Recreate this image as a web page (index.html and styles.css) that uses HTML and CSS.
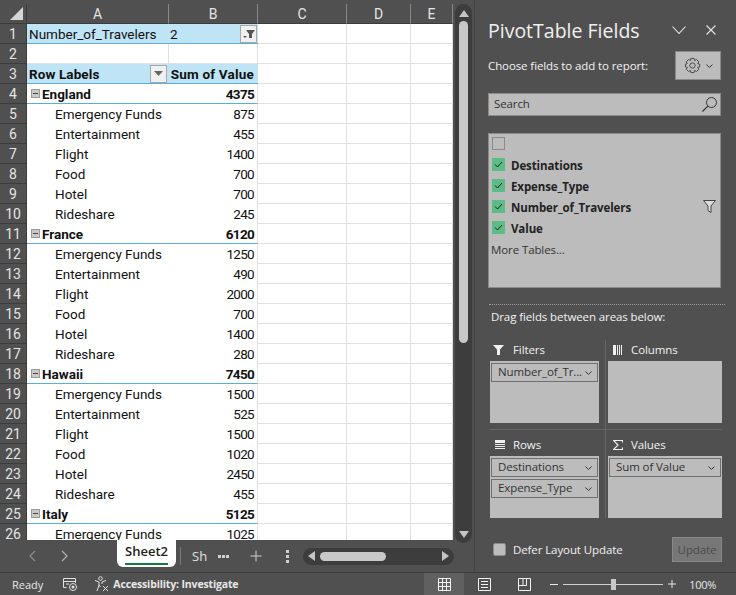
FILE: index.html
```html
<!DOCTYPE html>
<html lang="en">
<head>
    <meta charset="UTF-8">
    <title>PivotTable Fields</title>
    <link rel="stylesheet" href="styles.css">
</head>
<body>
<div class="main">
    <div class="workbook">
        <div class="sheet-area">
            <div class="sheet">
                <div class="head corner"><svg width="13" height="13" viewBox="0 0 13 13"><path d="M13 0V13H0Z" fill="#d6d6d6"/></svg></div>
                <div class="head col">A</div><div class="head col">B</div><div class="head col">C</div><div class="head col">D</div><div class="head col">E</div>

                <div class="head">1</div>
                <div class="cell band">Number_of_Travelers</div>
                <div class="cell band val-left">2<span class="drop"><svg width="14" height="10" viewBox="0 0 14 10"><path d="M4 1H13L10 5V9H7V5Z" fill="#555"/><path d="M1 7H5L3 9Z" fill="#555"/></svg></span></div>
                <div class="cell"></div><div class="cell"></div><div class="cell"></div>

                <div class="head">2</div>
                <div class="cell line"></div><div class="cell line"></div><div class="cell"></div><div class="cell"></div><div class="cell"></div>

                <div class="head">3</div>
                <div class="cell band strong">Row Labels<span class="drop"><svg width="9" height="5" viewBox="0 0 9 5"><path d="M0 0H9L4.500 5Z" fill="#666"/></svg></span></div>
                <div class="cell band strong sum-head">Sum of Value</div>
                <div class="cell"></div><div class="cell"></div><div class="cell"></div>

                <div class="head">4</div>
                <div class="cell group"><span class="toggle"></span>England</div><div class="cell group num">4375</div>
                <div class="cell"></div><div class="cell"></div><div class="cell"></div>
                <div class="head">5</div>
                <div class="cell item">Emergency Funds</div><div class="cell value">875</div>
                <div class="cell"></div><div class="cell"></div><div class="cell"></div>
                <div class="head">6</div>
                <div class="cell item">Entertainment</div><div class="cell value">455</div>
                <div class="cell"></div><div class="cell"></div><div class="cell"></div>
                <div class="head">7</div>
                <div class="cell item">Flight</div><div class="cell value">1400</div>
                <div class="cell"></div><div class="cell"></div><div class="cell"></div>
                <div class="head">8</div>
                <div class="cell item">Food</div><div class="cell value">700</div>
                <div class="cell"></div><div class="cell"></div><div class="cell"></div>
                <div class="head">9</div>
                <div class="cell item">Hotel</div><div class="cell value">700</div>
                <div class="cell"></div><div class="cell"></div><div class="cell"></div>
                <div class="head">10</div>
                <div class="cell item">Rideshare</div><div class="cell value">245</div>
                <div class="cell"></div><div class="cell"></div><div class="cell"></div>

                <div class="head">11</div>
                <div class="cell group"><span class="toggle"></span>France</div><div class="cell group num">6120</div>
                <div class="cell"></div><div class="cell"></div><div class="cell"></div>
                <div class="head">12</div>
                <div class="cell item">Emergency Funds</div><div class="cell value">1250</div>
                <div class="cell"></div><div class="cell"></div><div class="cell"></div>
                <div class="head">13</div>
                <div class="cell item">Entertainment</div><div class="cell value">490</div>
                <div class="cell"></div><div class="cell"></div><div class="cell"></div>
                <div class="head">14</div>
                <div class="cell item">Flight</div><div class="cell value">2000</div>
                <div class="cell"></div><div class="cell"></div><div class="cell"></div>
                <div class="head">15</div>
                <div class="cell item">Food</div><div class="cell value">700</div>
                <div class="cell"></div><div class="cell"></div><div class="cell"></div>
                <div class="head">16</div>
                <div class="cell item">Hotel</div><div class="cell value">1400</div>
                <div class="cell"></div><div class="cell"></div><div class="cell"></div>
                <div class="head">17</div>
                <div class="cell item">Rideshare</div><div class="cell value">280</div>
                <div class="cell"></div><div class="cell"></div><div class="cell"></div>

                <div class="head">18</div>
                <div class="cell group"><span class="toggle"></span>Hawaii</div><div class="cell group num">7450</div>
                <div class="cell"></div><div class="cell"></div><div class="cell"></div>
                <div class="head">19</div>
                <div class="cell item">Emergency Funds</div><div class="cell value">1500</div>
                <div class="cell"></div><div class="cell"></div><div class="cell"></div>
                <div class="head">20</div>
                <div class="cell item">Entertainment</div><div class="cell value">525</div>
                <div class="cell"></div><div class="cell"></div><div class="cell"></div>
                <div class="head">21</div>
                <div class="cell item">Flight</div><div class="cell value">1500</div>
                <div class="cell"></div><div class="cell"></div><div class="cell"></div>
                <div class="head">22</div>
                <div class="cell item">Food</div><div class="cell value">1020</div>
                <div class="cell"></div><div class="cell"></div><div class="cell"></div>
                <div class="head">23</div>
                <div class="cell item">Hotel</div><div class="cell value">2450</div>
                <div class="cell"></div><div class="cell"></div><div class="cell"></div>
                <div class="head">24</div>
                <div class="cell item">Rideshare</div><div class="cell value">455</div>
                <div class="cell"></div><div class="cell"></div><div class="cell"></div>

                <div class="head">25</div>
                <div class="cell group"><span class="toggle"></span>Italy</div><div class="cell group num">5125</div>
                <div class="cell"></div><div class="cell"></div><div class="cell"></div>
                <div class="head">26</div>
                <div class="cell item">Emergency Funds</div><div class="cell value">1025</div>
                <div class="cell"></div><div class="cell"></div><div class="cell"></div>
            </div>
            <div class="vscroll">
                <svg width="10" height="7" viewBox="0 0 10 7"><path d="M5 0L10 7H0Z" fill="#c4c4c4"/></svg>
                <div class="vthumb"></div>
                <svg width="10" height="7" viewBox="0 0 10 7"><path d="M0 0H10L5 7Z" fill="#c4c4c4"/></svg>
            </div>
        </div>
        <div class="tabbar">
            <svg class="nav" width="8" height="12" viewBox="0 0 8 12"><path d="M7 1L2 6L7 11" fill="none" stroke="#8f8f8f" stroke-width="1.200"/></svg>
            <svg class="nav" width="8" height="12" viewBox="0 0 8 12"><path d="M1 1L6 6L1 11" fill="none" stroke="#b0b0b0" stroke-width="1.200"/></svg>
            <div class="tab">Sheet2</div>
            <div class="tab-sep"></div>
            <div class="tab-other">Sh</div>
            <div class="tab-more"><i></i><i></i><i></i></div>
            <svg class="add" width="12" height="12" viewBox="0 0 12 12"><path d="M6 0.500V11.500M0.500 6H11.500" stroke="#cfcfcf" stroke-width="1"/></svg>
            <div class="tab-dots"><i></i><i></i><i></i></div>
            <div class="hscroll">
                <svg width="7" height="10" viewBox="0 0 7 10"><path d="M7 0V10L0 5Z" fill="#c4c4c4"/></svg>
                <div class="hthumb"></div>
                <svg width="7" height="10" viewBox="0 0 7 10"><path d="M0 0L7 5L0 10Z" fill="#c4c4c4"/></svg>
            </div>
        </div>
    </div>

    <div class="panel">
        <div class="panel-top">
            <h1>PivotTable Fields</h1>
            <svg class="chev" width="14" height="8" viewBox="0 0 14 8"><path d="M0.500 0.500L7 7.500L13.500 0.500" fill="none" stroke="#e6e6e6" stroke-width="1.100"/></svg>
            <svg class="close" width="10" height="10" viewBox="0 0 10 10"><path d="M0.500 0.500L9.500 9.500M9.500 0.500L0.500 9.500" stroke="#e6e6e6" stroke-width="1.100"/></svg>
        </div>
        <div class="choose-row">
            <span>Choose fields to add to report:</span>
            <div class="gear-btn">
                <svg width="17" height="17" viewBox="0 0 18 18"><path d="M7.300 1.500H10.700L11.200 3.700L13.300 2.700L15.700 5.100L14.500 7L16.500 7.500V10.500L14.500 11L15.700 12.900L13.300 15.300L11.200 14.300L10.700 16.500H7.300L6.800 14.300L4.700 15.300L2.300 12.900L3.500 11L1.500 10.500V7.500L3.500 7L2.300 5.100L4.700 2.700L6.800 3.700Z" fill="none" stroke="#444" stroke-width="1"/><circle cx="9" cy="9" r="2.800" fill="none" stroke="#444" stroke-width="1"/></svg>
                <svg width="7" height="4" viewBox="0 0 7 4"><path d="M0.500 0.500L3.500 3.500L6.500 0.500" fill="none" stroke="#333" stroke-width="1"/></svg>
            </div>
        </div>
        <div class="search">
            <span>Search</span>
            <svg width="15" height="15" viewBox="0 0 15 15"><circle cx="9.500" cy="5.500" r="5" fill="none" stroke="#333" stroke-width="1"/><path d="M5.800 9.200L0.500 14.500" stroke="#333" stroke-width="1.200"/></svg>
        </div>
        <div class="field-list">
            <div class="field first"><span class="check empty"></span></div>
            <div class="field"><span class="check"><svg width="9" height="7" viewBox="0 0 9 7"><path d="M1 3.500L3.500 6L8 1" fill="none" stroke="#222" stroke-width="1"/></svg></span><b>Destinations</b></div>
            <div class="field"><span class="check"><svg width="9" height="7" viewBox="0 0 9 7"><path d="M1 3.500L3.500 6L8 1" fill="none" stroke="#222" stroke-width="1"/></svg></span><b>Expense_Type</b></div>
            <div class="field"><span class="check"><svg width="9" height="7" viewBox="0 0 9 7"><path d="M1 3.500L3.500 6L8 1" fill="none" stroke="#222" stroke-width="1"/></svg></span><b>Number_of_Travelers</b>
                <svg class="field-filter" width="13" height="13" viewBox="0 0 13 13"><path d="M0.500 0.500H12.500L8 6V12.500L5 10.500V6Z" fill="#dcdcdc" stroke="#444" stroke-width="1"/></svg></div>
            <div class="field"><span class="check"><svg width="9" height="7" viewBox="0 0 9 7"><path d="M1 3.500L3.500 6L8 1" fill="none" stroke="#222" stroke-width="1"/></svg></span><b>Value</b></div>
            <div class="more">More Tables...</div>
        </div>
        <div class="dotted"></div>
        <div class="drag">Drag fields between areas below:</div>
        <div class="areas">
            <div class="area area-left area-top">
                <div class="area-label label-filters"><svg width="11" height="10" viewBox="0 0 11 10"><path d="M0 0H11L7 4.500V10H4V4.500Z" fill="#f0f0f0"/></svg>Filters</div>
                <div class="drop-box">
                    <div class="pill"><span>Number_of_Tr...</span><svg width="7" height="4" viewBox="0 0 7 4"><path d="M0.500 0.500L3.500 3.500L6.500 0.500" fill="none" stroke="#333" stroke-width="1"/></svg></div>
                </div>
            </div>
            <div class="area area-right area-top">
                <div class="area-label"><svg width="10" height="10" viewBox="0 0 10 10"><path d="M0 0H3V10H0ZM4 0H5V10H4ZM6 0H7V10H6ZM8 0H9V10H8Z" fill="#f0f0f0"/></svg>Columns</div>
                <div class="drop-box"></div>
            </div>
            <div class="area area-left area-bottom">
                <div class="area-label"><svg width="10" height="10" viewBox="0 0 10 10"><path d="M0 0H10V3H0ZM0 4H10V5H0ZM0 6H10V7H0ZM0 8H10V9H0Z" fill="#f0f0f0"/></svg>Rows</div>
                <div class="drop-box">
                    <div class="pill"><span>Destinations</span><svg width="7" height="4" viewBox="0 0 7 4"><path d="M0.500 0.500L3.500 3.500L6.500 0.500" fill="none" stroke="#333" stroke-width="1"/></svg></div>
                    <div class="pill"><span>Expense_Type</span><svg width="7" height="4" viewBox="0 0 7 4"><path d="M0.500 0.500L3.500 3.500L6.500 0.500" fill="none" stroke="#333" stroke-width="1"/></svg></div>
                </div>
            </div>
            <div class="area area-right area-bottom">
                <div class="area-label"><svg width="10" height="10" viewBox="0 0 10 10"><path d="M9.500 2.500V0.500H0.500L5 5L0.500 9.500H9.500V7.500" fill="none" stroke="#f0f0f0" stroke-width="1.200"/></svg>Values</div>
                <div class="drop-box">
                    <div class="pill"><span>Sum of Value</span><svg width="7" height="4" viewBox="0 0 7 4"><path d="M0.500 0.500L3.500 3.500L6.500 0.500" fill="none" stroke="#333" stroke-width="1"/></svg></div>
                </div>
            </div>
        </div>
        <div class="defer-row">
            <span class="defer-box"></span>
            <span class="defer-text">Defer Layout Update</span>
            <div class="update">Update</div>
        </div>
    </div>
</div>

<div class="statusbar">
    <span class="ready">Ready</span>
    <svg class="macro" width="16" height="14" viewBox="0 0 16 14"><path d="M4.500 10.500H1.500V1.500H13.500V6M1.500 4.500H13.500M4 7H7" fill="none" stroke="#e0e0e0" stroke-width="1"/><circle cx="11" cy="10" r="3.500" fill="none" stroke="#e0e0e0" stroke-width="1"/><circle cx="11" cy="10" r="1.500" fill="#e0e0e0"/></svg>
    <svg class="access" width="15" height="16" viewBox="0 0 15 16"><circle cx="6.500" cy="2.500" r="1.800" fill="none" stroke="#e0e0e0" stroke-width="1"/><path d="M1 4.500L5 6V9L3 15M12 4.500L8 6V8M5 9L6.500 11" fill="none" stroke="#e0e0e0" stroke-width="1"/><path d="M9 10L14 15M14 10L9 15" stroke="#e0e0e0" stroke-width="1"/></svg>
    <b class="access-text">Accessibility: Investigate</b>
    <div class="view-btn active"><svg width="13" height="13" viewBox="0 0 13 13"><path d="M0.500 0.500H12.500V12.500H0.500ZM4.500 0.500V12.500M8.500 0.500V12.500M0.500 4.500H12.500M0.500 8.500H12.500" fill="none" stroke="#f2f2f2" stroke-width="1"/></svg></div>
    <div class="view-btn"><svg width="13" height="13" viewBox="0 0 13 13"><path d="M0.500 0.500H12.500V12.500H0.500ZM3 3.500H10M3 6.500H10M3 9.500H10" fill="none" stroke="#f2f2f2" stroke-width="1"/></svg></div>
    <div class="view-btn"><svg width="13" height="13" viewBox="0 0 13 13"><path d="M0.500 0.500H12.500V12.500H0.500ZM5 0.500V7.500H8.500V0.500M0.500 7.500H5" fill="none" stroke="#f2f2f2" stroke-width="1"/></svg></div>
    <svg class="zoom-minus" width="8" height="1" viewBox="0 0 8 1"><path d="M0 0.500H8" stroke="#e8e8e8"/></svg>
    <div class="slider"><div class="knob"></div></div>
    <svg class="zoom-plus" width="8" height="8" viewBox="0 0 8 8"><path d="M0 4H8M4 0V8" stroke="#e8e8e8"/></svg>
    <span class="pct">100%</span>
</div>
</body>
</html>
```

FILE: styles.css
```css
* {
    margin: 0;
    padding: 0;
    box-sizing: border-box;
}
body {
    width: 736px;
    height: 595px;
    overflow: hidden;
    background: #505050;
    font-family: "Open Sans", sans-serif;
    display: flex;
    flex-direction: column;
}
.main {
    display: flex;
    height: 572px;
}

/* sheet */
.workbook {
    width: 475px;
    flex-shrink: 0;
    padding-top: 4px;
    border-right: 1px solid #454545;
    display: flex;
    flex-direction: column;
}
.sheet-area {
    display: flex;
    height: 536px;
}
.sheet {
    width: 453px;
    height: 536px;
    overflow: hidden;
    display: grid;
    grid-template-columns: 27px 142px 89px 89px 64px 42px;
    grid-auto-rows: 20px;
    font-family: Roboto, sans-serif;
    font-size: 13.5px;
    color: #111;
    background: #fff;
}
.head {
    background: #505050;
    color: #e4e4e4;
    font-size: 14px;
    display: flex;
    align-items: center;
    justify-content: center;
    border-bottom: 1px solid #3c3c3c;
    border-right: 1px solid #3c3c3c;
}
.head.col {
    border-right: 1px solid #8a8a8a;
    border-bottom: 1px solid #3c3c3c;
}
.corner {
    justify-content: flex-end;
    align-items: flex-end;
    padding: 0 3px 3px 0;
}
.cell {
    display: flex;
    align-items: center;
    padding: 0 2px;
    white-space: nowrap;
    border-right: 1px solid #e0e0e0;
    border-bottom: 1px solid #e0e0e0;
    background: #fff;
}
.band {
    background: #bfe4f5;
    border-right: 0;
    border-bottom: 1px solid #5aaedb;
    justify-content: space-between;
}
.val-left {
    padding-left: 1px;
    padding-right: 1px;
}
.strong {
    font-weight: 700;
    letter-spacing: 0.1px;
}
.sum-head {
    justify-content: flex-end;
    padding-right: 4px;
    letter-spacing: 0.2px;
}
.num {
    justify-content: flex-end;
    letter-spacing: -0.7px;
}
.line {
    border-bottom: 1px solid #e0e0e0;
}
.group {
    font-weight: 700;
    border-right: 0;
    border-bottom: 1px solid #5aaedb;
}
.group.num {
    padding-right: 3px;
    border-right: 1px solid #e0e0e0;
}
.item {
    padding-left: 28px;
    border-right: 0;
    border-bottom: 0;
}
.value {
    justify-content: flex-end;
    padding-right: 3px;
    border-bottom: 0;
    letter-spacing: -0.7px;
}
.toggle {
    width: 9px;
    height: 9px;
    margin: 0 2px 0 2px;
    background: #c9c9c9;
    border: 1px solid #9a9a9a;
    display: flex;
    align-items: center;
    justify-content: center;
}
.toggle::after {
    content: "";
    width: 5px;
    height: 1px;
    background: #444;
}
.drop {
    width: 17px;
    height: 18px;
    background: #f0f0f0;
    border: 1px solid #a8a8a8;
    display: flex;
    align-items: center;
    justify-content: center;
}
.vscroll {
    width: 17px;
    margin-left: 2px;
    padding: 6px 0 5px;
    height: 539px;
    background: #3d3d3d;
    border-radius: 9px;
    display: flex;
    flex-direction: column;
    align-items: center;
    position: relative;
    z-index: 1;
}
.vthumb {
    width: 9px;
    height: 322px;
    margin-top: 4px;
    background: #c8c8c8;
    border-radius: 5px;
    margin-bottom: auto;
}

/* tabs */
.tabbar {
    height: 32px;
    display: flex;
    align-items: center;
    color: #e0e0e0;
}
.nav {
    margin-left: 28px;
    flex-shrink: 0;
}
.nav + .nav {
    margin-left: 25px;
}
.tab {
    width: 59px;
    height: 27px;
    margin: -5px 0 0 48px;
    background: #fff;
    color: #222;
    border-radius: 0 0 6px 6px;
    font-size: 13px;
    font-weight: 600;
    text-align: center;
    line-height: 22px;
}
.tab::after {
    content: "";
    display: block;
    width: 43px;
    height: 2px;
    margin: 1px auto 0;
    background: #107c41;
}
.tab-sep {
    width: 1px;
    height: 18px;
    margin-left: 4px;
    background: #7a7a7a;
}
.tab-other {
    margin-left: 11px;
    font-size: 13px;
}
.tab-more {
    display: flex;
    gap: 1px;
    margin-left: 11px;
}
.tab-more i {
    width: 3px;
    height: 3px;
    background: #d0d0d0;
}
.add {
    margin-left: 21px;
}
.tab-dots {
    display: flex;
    flex-direction: column;
    gap: 2px;
    margin-left: 24px;
}
.tab-dots i {
    width: 3px;
    height: 3px;
    background: #d0d0d0;
}
.hscroll {
    width: 151px;
    height: 17px;
    margin-left: 14px;
    padding: 0 5px;
    background: #3d3d3d;
    border-radius: 9px;
    display: flex;
    align-items: center;
}
.hthumb {
    width: 66px;
    height: 9px;
    margin: 0 auto 0 5px;
    background: #c8c8c8;
    border-radius: 5px;
}

/* panel */
.panel {
    flex: 1;
    min-width: 0;
    padding: 0 15px 0 13px;
    color: #f2f2f2;
    font-size: 11.5px;
    letter-spacing: -0.1px;
}
.panel-top {
    display: flex;
    align-items: center;
    height: 43px;
    padding-top: 17px;
}
.panel-top h1 {
    font-size: 19.5px;
    font-weight: 400;
    letter-spacing: 0;
    flex: 1;
    color: #f0f0f0;
}
.close {
    margin: 0 5px 0 20px;
}
.choose-row {
    display: flex;
    align-items: center;
    justify-content: space-between;
    margin-top: 8px;
    height: 29px;
}
.gear-btn {
    width: 46px;
    height: 29px;
    background: #bcbcbc;
    border: 1px solid #8a8a8a;
    display: flex;
    align-items: center;
    justify-content: center;
    gap: 5px;
}
.search {
    height: 23px;
    margin-top: 13px;
    padding: 0 3px 0 5px;
    background: #bcbcbc;
    border: 1px solid #8a8a8a;
    color: #333;
    display: flex;
    align-items: center;
    justify-content: space-between;
}
.search span {
    margin-bottom: 2px;
}
.field-list {
    height: 155px;
    margin-top: 17px;
    padding: 0 4px 0 3px;
    background: #bcbcbc;
    border: 1px solid #8a8a8a;
    color: #222;
}
.field {
    height: 21px;
    display: flex;
    align-items: center;
    gap: 6px;
}
.field b {
    margin-top: 2px;
}
.field.first {
    height: 19px;
    margin-bottom: 1px;
}
.check {
    width: 13px;
    height: 13px;
    background: #5dbb85;
    display: flex;
    align-items: center;
    justify-content: center;
}
.check.empty {
    background: transparent;
    border: 1px solid #8a8a8a;
}
.field-filter {
    margin-left: auto;
}
.more {
    margin: 1px 0 0 -1px;
    line-height: 21px;
    color: #333;
}
.dotted {
    margin: 16px -4px 0 1px;
    border-top: 1px dotted #a0a0a0;
}
.drag {
    margin: 4px 0 0 3px;
    line-height: 16px;
}
.areas {
    display: grid;
    grid-template-columns: 116px 116px;
    margin: 15px -1px 0 2px;
}
.area {
    display: flex;
    flex-direction: column;
}
.area-left {
    padding-right: 6px;
    border-right: 1px solid #666;
}
.area-right {
    padding-left: 2px;
}
.area-top {
    height: 90px;
    border-bottom: 1px solid #666;
}
.area-bottom {
    height: 88px;
    padding-top: 5px;
}
.area-label {
    height: 21px;
    padding-bottom: 2px;
    display: flex;
    align-items: center;
    gap: 8px;
    padding-left: 5px;
}
.label-filters {
    gap: 9px;
    padding-left: 3px;
}
.drop-box {
    height: 62px;
    padding: 2px 1px;
    background: #bcbcbc;
}
.pill {
    height: 19px;
    margin-bottom: 2px;
    padding: 0 5px 0 6px;
    border: 1px solid #707070;
    color: #333;
    display: flex;
    align-items: center;
    justify-content: space-between;
}
.pill span {
    margin-bottom: 2px;
}
.defer-row {
    display: flex;
    align-items: center;
    margin: 19px -1px 0 5px;
}
.defer-box {
    width: 13px;
    height: 13px;
    background: #bcbcbc;
    border: 1px solid #8a8a8a;
    border-radius: 2px;
}
.defer-text {
    margin-left: 7px;
    flex: 1;
}
.update {
    width: 50px;
    height: 25px;
    line-height: 23px;
    text-align: center;
    background: #777;
    border: 1px solid #888;
    color: #4a4a4a;
}

/* status bar */
.statusbar {
    height: 23px;
    border-top: 1px solid #3c3c3c;
    display: flex;
    align-items: center;
    font-size: 11px;
    color: #e8e8e8;
}
.ready {
    margin-left: 12px;
}
.macro {
    margin-left: 19px;
}
.access {
    margin-left: 16px;
}
.access-text {
    margin-left: 4px;
    width: 311px;
    font-size: 10.5px;
    letter-spacing: -0.15px;
}
.view-btn {
    width: 40px;
    height: 22px;
    display: flex;
    align-items: center;
    justify-content: center;
}
.view-btn.active {
    background: #606060;
}
.zoom-minus {
    margin-left: 6px;
}
.slider {
    width: 100px;
    height: 1px;
    margin-left: 5px;
    background: #d0d0d0;
    display: flex;
    align-items: center;
    justify-content: center;
}
.knob {
    flex-shrink: 0;
    width: 5px;
    height: 11px;
    background: #c8c8c8;
}
.zoom-plus {
    margin-left: 5px;
}
.pct {
    margin-left: 13px;
    letter-spacing: -0.3px;
}
```
